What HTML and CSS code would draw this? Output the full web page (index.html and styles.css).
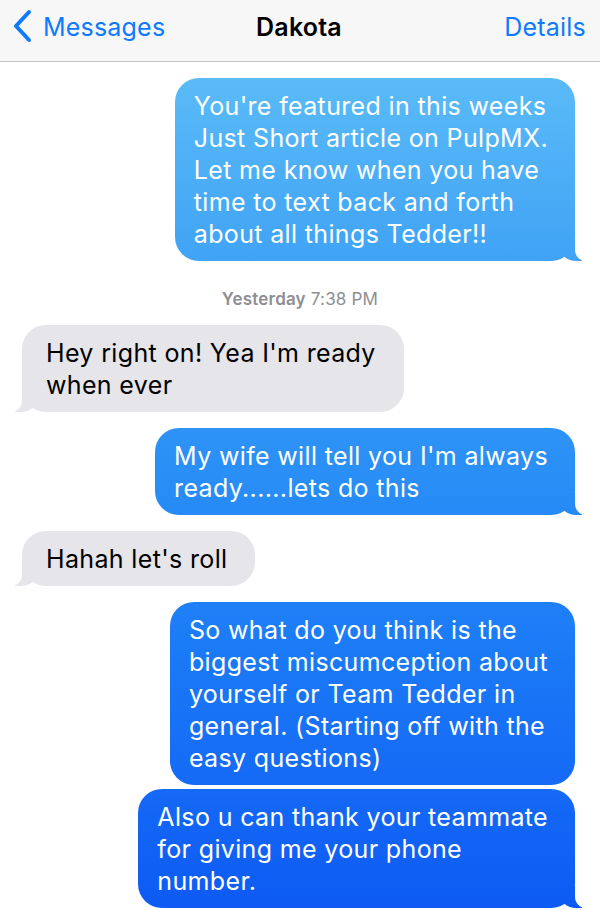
FILE: index.html
```html
<!DOCTYPE html>
<html lang="en">
<head>
    <meta charset="UTF-8">
    <meta name="viewport" content="width=device-width, initial-scale=1.0">
    <title>Dakota</title>
    <link rel="stylesheet" href="styles.css">
</head>
<body>

    <header class="nav">
        <a class="nav-back" href="#">
            <svg class="chevron" width="20" height="34" viewBox="0 0 20 34">
                <path d="M17 3 L4 17 L17 31" fill="none" stroke="currentColor" stroke-width="4" stroke-linecap="round" stroke-linejoin="round"/>
            </svg>
            <span>Messages</span>
        </a>
        <div class="nav-title">Dakota</div>
        <a class="nav-details" href="#">Details</a>
    </header>

    <main class="thread">
        <div class="bubble out">You're featured in this weeks<br>Just Short article on PulpMX.<br>Let me know when you have<br>time to text back and forth<br>about all things Tedder!!</div>

        <div class="stamp"><b>Yesterday</b> 7:38 PM</div>

        <div class="bubble in">Hey right on! Yea I'm ready<br>when ever</div>

        <div class="bubble out">My wife will tell you I'm always<br>ready......lets do this</div>

        <div class="bubble in">Hahah let's roll</div>

        <div class="bubble out no-tail">So what do you think is the<br>biggest miscumception about<br>yourself or Team Tedder in<br>general. (Starting off with the<br>easy questions)</div>

        <div class="bubble out follow">Also u can thank your teammate<br>for giving me your phone<br>number.</div>
    </main>

</body>
</html>
```

FILE: styles.css
```css
body {
    margin: 0;
    background: #fff;
    font-family: Inter, "Liberation Sans", Arial, sans-serif;
    overflow: hidden;
}

/* top bar */
.nav {
    display: grid;
    grid-template-columns: 1fr auto 1fr;
    align-items: center;
    height: 53px;
    padding: 0 14px 8px 12px;
    background: #f7f7f8;
    border-bottom: 1px solid #c6c6c8;
    font-size: 25px;
    letter-spacing: 0.2px;
}

.nav a {
    color: #0e7afe;
    text-decoration: none;
}

.nav-back {
    justify-self: start;
    display: flex;
    align-items: center;
    gap: 11px;
}

.chevron {
    display: block;
    margin-top: -1px;
}

.nav-title {
    font-weight: 600;
    color: #000;
}

.nav-details {
    justify-self: end;
}

/* conversation */
.thread {
    display: flex;
    flex-direction: column;
    gap: 16px;
    padding: 16px 0 0;
}

.bubble {
    position: relative;
    font-size: 25px;
    line-height: 32px;
    letter-spacing: 0.35px;
    border-radius: 24px;
    padding: 12px 27px 11px 19px;
}

.out {
    align-self: flex-end;
    margin-right: 25px;
    color: #fff;
    background: linear-gradient(to bottom, #5dbdf8 60px, #40a3f5 260px, #2a8ff6 470px, #1b7af6 650px, #1468f5 800px, #0d5af4 910px) fixed;
}

.in {
    align-self: flex-start;
    margin-left: 22px;
    color: #000;
    background: #e5e5ea;
    padding: 12px 28px 11px 24px;
}

/* tails */
.bubble::before,
.bubble::after {
    content: "";
    position: absolute;
    bottom: 0;
    height: 22px;
}

.out::before {
    right: -7px;
    width: 22px;
    background: inherit;
    border-bottom-left-radius: 16px 14px;
}

.out::after {
    right: -26px;
    width: 26px;
    background: #fff;
    border-bottom-left-radius: 11px;
}

.in::before {
    left: -7px;
    width: 22px;
    background: #e5e5ea;
    border-bottom-right-radius: 16px 14px;
}

.in::after {
    left: -26px;
    width: 26px;
    background: #fff;
    border-bottom-right-radius: 11px;
}

.no-tail::before,
.no-tail::after {
    display: none;
}

.follow {
    margin-top: -12px;
}

.stamp {
    text-align: center;
    font-size: 17px;
    line-height: 22px;
    letter-spacing: 0.2px;
    color: #8e8e93;
    margin: 11px 0 -1px;
}

.stamp b {
    font-weight: 600;
}
```
